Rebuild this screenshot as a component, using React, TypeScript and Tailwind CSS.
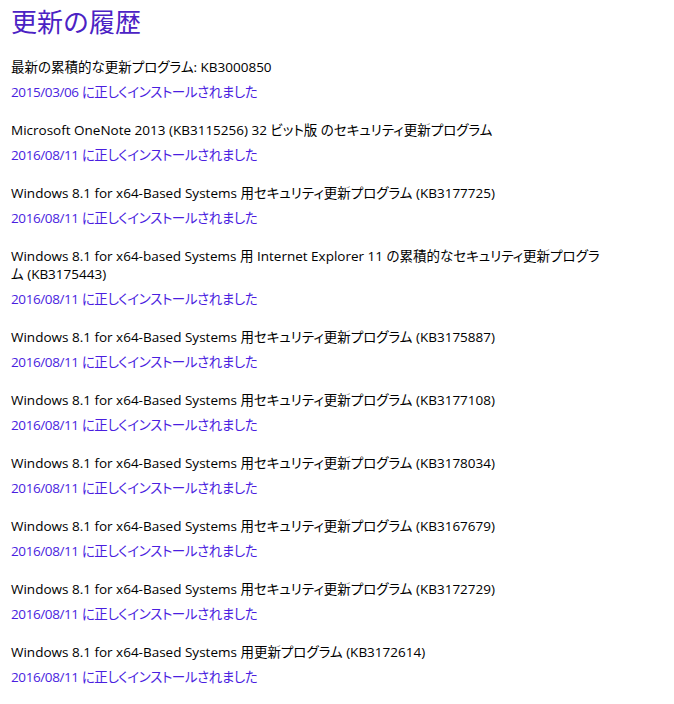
import React from "react";

const updates: { name: string; date: string }[] = [
  { name: "最新の累積的な更新プログラム: KB3000850", date: "2015/03/06" },
  { name: "Microsoft OneNote 2013 (KB3115256) 32 ビット版 のセキュリティ更新プログラム", date: "2016/08/11" },
  { name: "Windows 8.1 for x64-Based Systems 用セキュリティ更新プログラム (KB3177725)", date: "2016/08/11" },
  {
    name: "Windows 8.1 for x64-based Systems 用 Internet Explorer 11 の累積的なセキュリティ更新プログラム (KB3175443)",
    date: "2016/08/11",
  },
  { name: "Windows 8.1 for x64-Based Systems 用セキュリティ更新プログラム (KB3175887)", date: "2016/08/11" },
  { name: "Windows 8.1 for x64-Based Systems 用セキュリティ更新プログラム (KB3177108)", date: "2016/08/11" },
  { name: "Windows 8.1 for x64-Based Systems 用セキュリティ更新プログラム (KB3178034)", date: "2016/08/11" },
  { name: "Windows 8.1 for x64-Based Systems 用セキュリティ更新プログラム (KB3167679)", date: "2016/08/11" },
  { name: "Windows 8.1 for x64-Based Systems 用セキュリティ更新プログラム (KB3172729)", date: "2016/08/11" },
  { name: "Windows 8.1 for x64-Based Systems 用更新プログラム (KB3172614)", date: "2016/08/11" },
];

const App: React.FC = () => {
  return (
    <div className="min-h-[704px] w-[674px] bg-white pl-[11px] pt-[5px] font-['Open_Sans','Noto_Sans_CJK_JP',sans-serif]">
      <h1 className="text-[26px] leading-[34px] font-normal text-[#4b22c4]">更新の履歴</h1>
      <div className="mt-[19px] flex w-[600px] flex-col gap-[20px] [font-feature-settings:'palt']">
        {updates.map((item, index) => (
          <div key={index} className="flex flex-col">
            <span className="text-[13.5px] leading-[18px] text-black">{item.name}</span>
            <span className="mt-[7px] text-[13.5px] leading-[18px] tracking-[-0.4px] text-[#4a1ee0]">
              {item.date} に正しくインストールされました
            </span>
          </div>
        ))}
      </div>
    </div>
  );
};

export default App;
